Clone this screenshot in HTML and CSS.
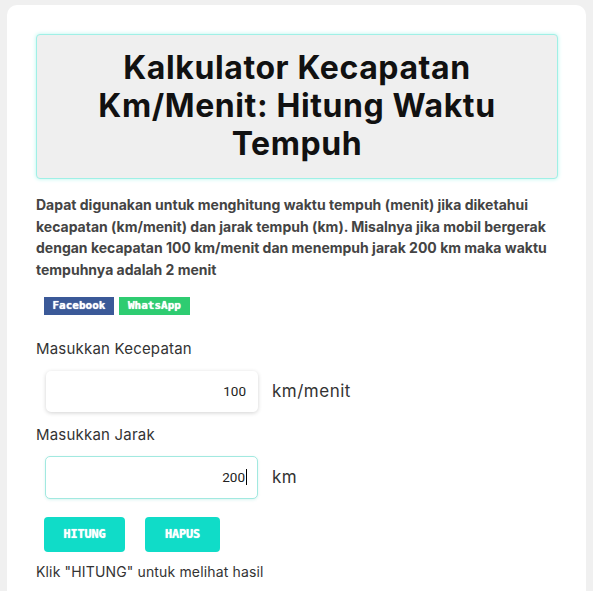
FILE: index.html
```html
<!DOCTYPE html>
<html lang="id">
<head>
<meta charset="utf-8">
<title>Kalkulator Kecapatan Km/Menit</title>
<link rel="stylesheet" href="styles.css">
</head>
<body>
<div class="card">
  <div class="title-box">
    <h1 class="title">Kalkulator Kecapatan Km/Menit: Hitung Waktu Tempuh</h1>
  </div>
  <p class="desc">Dapat digunakan untuk menghitung waktu tempuh (menit) jika diketahui kecapatan (km/menit) dan jarak tempuh (km). Misalnya jika mobil bergerak dengan kecapatan 100 km/menit dan menempuh jarak 200 km maka waktu tempuhnya adalah 2 menit</p>
  <div class="share">
    <span class="share-btn fb">Facebook</span>
    <span class="share-btn wa">WhatsApp</span>
  </div>
  <div class="field">
    <label class="label">Masukkan Kecepatan</label>
    <div class="row">
      <div class="input">100</div>
      <span class="unit">km/menit</span>
    </div>
  </div>
  <div class="field">
    <label class="label">Masukkan Jarak</label>
    <div class="row">
      <div class="input focus">200<span class="caret"></span></div>
      <span class="unit">km</span>
    </div>
  </div>
  <div class="actions">
    <button class="btn">HITUNG</button>
    <button class="btn">HAPUS</button>
  </div>
  <p class="hint">Klik "HITUNG" untuk melihat hasil</p>
</div>
</body>
</html>
```
FILE: styles.css
```css
html, body {
  margin: 0;
  padding: 0;
  background: #f0f0f0;
  font-family: "Inter", "Open Sans", sans-serif;
  color: #333;
}
.card {
  margin: 5px 7px 0 7px;
  background: #fff;
  border-radius: 10px 10px 0 0;
  padding: 29px 28px 20px 29px;
  height: 600px;
  box-sizing: border-box;
}
.title-box {
  background: #efefef;
  border: 1px solid #9ff0e6;
  box-shadow: 0 0 4px #b6f5ee;
  border-radius: 4px;
  padding: 14px 20px 15px;
}
.title {
  margin: 0;
  text-align: center;
  font-size: 32px;
  line-height: 38px;
  font-weight: 700;
  color: #111;
  letter-spacing: 0.6px;
}
.desc {
  margin: 15px 0 0 0;
  font-size: 14px;
  line-height: 21.7px;
  font-weight: 700;
  color: #444;
}
.share {
  display: flex;
  gap: 5px;
  margin: 16px 0 0 8px;
}
.share-btn {
  display: inline-block;
  box-sizing: border-box;
  height: 18px;
  line-height: 18px;
  text-align: center;
  color: #fff;
  font-family: "DejaVu Sans Mono", monospace;
  font-size: 11px;
  font-weight: 700;
  letter-spacing: 0;
  text-shadow: 0 0 1px #fff;
}
.fb { background: #3b5998; width: 70px; }
.wa { background: #2ecc71; width: 71px; }
.field {
  margin-top: 24px;
}
.field + .field { margin-top: 13px; }
.label {
  display: block;
  font-size: 15px;
  line-height: 20px;
  color: #333;
  letter-spacing: 0.2px;
}
.row {
  display: flex;
  align-items: center;
  gap: 14px;
  margin: 12px 0 0 10px;
}
.field + .field .row { margin-top: 11px; }
.input {
  width: 212px;
  height: 41px;
  box-sizing: border-box;
  border-radius: 5px;
  background: #fff;
  box-shadow: 0 1px 4px rgba(0,0,0,0.18);
  display: flex;
  align-items: center;
  justify-content: flex-end;
  padding-right: 12px;
  font-family: "Roboto", "Liberation Sans", sans-serif;
  font-size: 13.5px;
  color: #222;
}
.input.focus {
  width: 213px;
  height: 43px;
  border: 1px solid #a2e9e0;
  box-shadow: 0 1px 3px rgba(0,180,160,0.15);
  margin-left: -1px;
  padding-right: 10px;
}
.caret {
  display: inline-block;
  width: 1px;
  height: 16px;
  background: #000;
  margin-left: 1px;
}
.unit {
  font-size: 17px;
  color: #333;
  letter-spacing: 0.5px;
}
.actions {
  display: flex;
  gap: 20px;
  margin: 18px 0 0 8px;
}
.btn {
  border: none;
  border-radius: 4px;
  background: #10dcc8;
  color: #fff;
  height: 35px;
  padding: 0;
  width: 81px;
  font-family: "DejaVu Sans Mono", monospace;
  font-weight: 700;
  font-size: 12px;
  letter-spacing: -0.2px;
  text-shadow: 0 0 1px #fff;
}
.btn + .btn { width: 75px; }
.hint {
  margin: 10px 0 0 0;
  font-size: 14px;
  line-height: 20px;
  color: #333;
  letter-spacing: 0.15px;
}
```
